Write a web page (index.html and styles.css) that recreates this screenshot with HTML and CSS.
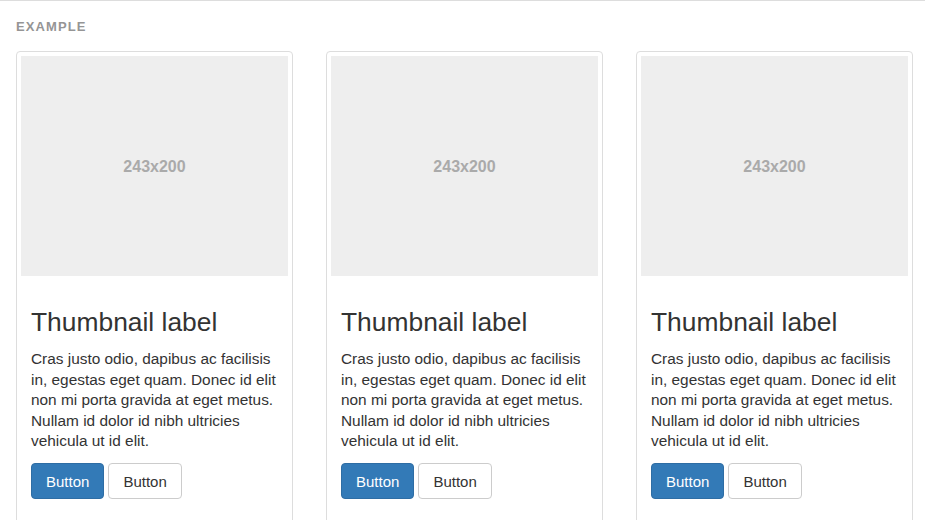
FILE: index.html
```html
<!DOCTYPE html>
<html lang="en">
<head>
<meta charset="utf-8">
<title>Thumbnails example</title>
<link rel="stylesheet" href="styles.css">
</head>
<body>
<div class="example">
  <div class="example-label">Example</div>
  <div class="thumb-row">
    <div class="thumbnail">
      <div class="holder">243x200</div>
      <div class="caption">
        <h3>Thumbnail label</h3>
        <p>Cras justo odio, dapibus ac facilisis in, egestas eget quam. Donec id elit non mi porta gravida at eget metus. Nullam id dolor id nibh ultricies vehicula ut id elit.</p>
        <div class="actions"><a class="btn btn-primary">Button</a><a class="btn btn-default">Button</a></div>
      </div>
    </div>
    <div class="thumbnail">
      <div class="holder">243x200</div>
      <div class="caption">
        <h3>Thumbnail label</h3>
        <p>Cras justo odio, dapibus ac facilisis in, egestas eget quam. Donec id elit non mi porta gravida at eget metus. Nullam id dolor id nibh ultricies vehicula ut id elit.</p>
        <div class="actions"><a class="btn btn-primary">Button</a><a class="btn btn-default">Button</a></div>
      </div>
    </div>
    <div class="thumbnail">
      <div class="holder">243x200</div>
      <div class="caption">
        <h3>Thumbnail label</h3>
        <p>Cras justo odio, dapibus ac facilisis in, egestas eget quam. Donec id elit non mi porta gravida at eget metus. Nullam id dolor id nibh ultricies vehicula ut id elit.</p>
        <div class="actions"><a class="btn btn-primary">Button</a><a class="btn btn-default">Button</a></div>
      </div>
    </div>
  </div>
</div>
</body>
</html>
```

FILE: styles.css
```css
html, body {
  margin: 0;
  padding: 0;
  background: #fff;
}
body {
  font-family: "Liberation Sans", Arial, Helvetica, sans-serif;
  color: #333;
  font-size: 15.4px;
  line-height: 20.5px;
}
.example {
  border-top: 1px solid #ddd;
  padding: 17.5px 16px 0 16px;
}
.example-label {
  font-size: 13px;
  line-height: 15px;
  font-weight: bold;
  letter-spacing: 1.1px;
  text-transform: uppercase;
  color: #959595;
  margin-bottom: 17.5px;
}
.thumb-row {
  display: grid;
  grid-template-columns: repeat(3, 277px);
  column-gap: 33px;
  align-items: start;
}
.thumbnail {
  border: 1px solid #ddd;
  border-radius: 4px;
  padding: 4px;
  background: #fff;
}
.holder {
  box-sizing: border-box;
  height: 220px;
  padding-top: 2px;
  background: #eee;
  color: #aaa;
  font-weight: bold;
  font-size: 16px;
  display: flex;
  align-items: center;
  justify-content: center;
}
.caption {
  padding: 10px 10px 30px 10px;
}
.caption h3 {
  font-size: 26.4px;
  font-weight: 500;
  line-height: 29px;
  margin: 22px 0 12px 0;
  color: #333;
}
.caption p {
  margin: 0 0 11.5px 0;
}
.actions {
  display: flex;
  gap: 4px;
}
.btn {
  display: inline-block;
  padding: 6.5px 14px;
  font-size: 15px;
  line-height: 21px;
  border: 1px solid transparent;
  border-radius: 4px;
  text-decoration: none;
  cursor: pointer;
}
.btn-primary {
  background: #337ab7;
  border-color: #2e6da4;
  color: #fff;
}
.btn-default {
  background: #fff;
  border-color: #ccc;
  color: #333;
}
```
